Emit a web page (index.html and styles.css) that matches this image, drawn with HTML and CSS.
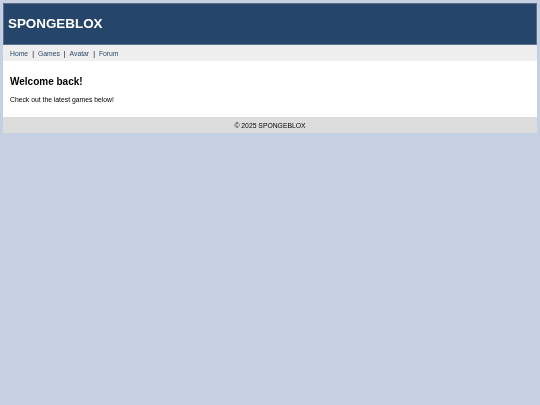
FILE: index.html
```html
<!DOCTYPE html>
<html>
<head>
<meta charset="utf-8">
<link rel="stylesheet" href="styles.css">
</head>
<body>
<div class="page">
  <header class="site-header"><h1 class="logo">SPONGEBLOX</h1></header>
  <nav class="site-nav">
    <a href="#">Home</a><span class="sep">|</span><a href="#">Games</a><span class="sep">|</span><a href="#">Avatar</a><span class="sep">|</span><a href="#">Forum</a>
  </nav>
  <main class="content">
    <h2 class="welcome">Welcome back!</h2>
    <p class="intro">Check out the latest games below!</p>
  </main>
  <footer class="site-footer">© 2025 SPONGEBLOX</footer>
</div>
</body>
</html>
```
FILE: styles.css
```css
html, body { margin: 0; padding: 0; }
body {
  background: #c6d0e3;
  font-family: "Liberation Sans", Arial, sans-serif;
  font-size: 6.8px;
  color: #000;
  -webkit-font-smoothing: antialiased;
}
.page {
  margin: 3px;
  background: #fff;
  will-change: transform;
}
.site-header {
  box-sizing: border-box;
  height: 42px;
  background: #25466a;
  border: 1px solid #5d6f86;
  display: flex;
  align-items: center;
  padding: 0 4px;
}
.logo {
  margin: 0;
  color: #fff;
  font-size: 13.4px;
  font-weight: bold;
  line-height: 16px;
}
.site-nav {
  height: 16px;
  background: #eeeeee;
  display: flex;
  align-items: center;
  padding: 0 7px;
}
.site-nav a {
  color: #2c4a6b;
  text-decoration: none;
}
.sep {
  margin: 0 4px;
}
.content {
  padding: 15px 7px 13px;
}
.welcome {
  margin: 0;
  font-size: 10px;
  line-height: 12px;
  font-weight: bold;
}
.intro {
  margin: 8px 0 0;
  line-height: 8px;
}
.site-footer {
  height: 16px;
  background: #dddddd;
  display: flex;
  align-items: center;
  justify-content: center;
}
```
